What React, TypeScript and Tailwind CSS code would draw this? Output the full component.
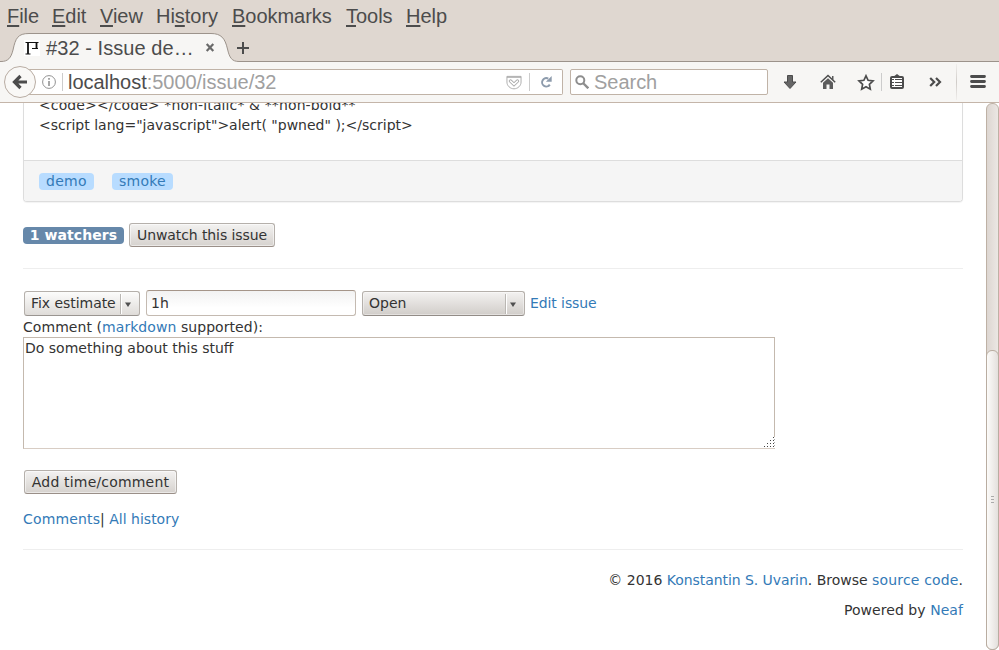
import React from 'react';

const menus: [string, string, string, string][] = [
  ['', 'F', 'ile', 'w-[45px]'],
  ['', 'E', 'dit', 'w-[48px]'],
  ['', 'V', 'iew', 'w-[56px]'],
  ['Hi', 's', 'tory', 'w-[76px]'],
  ['', 'B', 'ookmarks', 'w-[114px]'],
  ['', 'T', 'ools', 'w-[60px]'],
  ['', 'H', 'elp', 'w-[50px]'],
];

function MenuBar() {
  return (
    <div className="flex h-[33px] shrink-0 pl-[7px] text-[20px] leading-[32px] text-[#4c4c4c]">
      {menus.map(([a, key, b, w]) => (
        <div key={key + b} className={`${w} shrink-0 whitespace-nowrap tracking-[-0.03px]`}>
          {a}
          <span className="underline decoration-2 underline-offset-[2px] [text-decoration-skip-ink:none]">{key}</span>
          {b}
        </div>
      ))}
    </div>
  );
}

function TabStrip() {
  return (
    <div className="relative flex h-[29px] shrink-0 items-center">
      <svg className="absolute left-0 top-0" width="999" height="29" viewBox="0 0 999 29">
        <path d="M0 28.5H1C8 28.5 11 25 13 17C15.500 5 18 .5 29 .5H211C221 .5 225 5 227.500 16C229.500 25 232 28.500 239 28.500H999V30H0Z" fill="#f7f6f4" />
        <path d="M0 28.5H1C8 28.5 11 25 13 17C15.500 5 18 .5 29 .5H211C221 .5 225 5 227.500 16C229.500 25 232 28.500 239 28.500H999" fill="none" stroke="#9c938b" />
      </svg>
      <div className="relative flex h-full w-full items-center pl-[24px]">
        <svg width="16" height="16" viewBox="0 0 16 16" className="mr-[6px] shrink-0">
          <path d="M0 0H16V16H0Z" fill="#fff" />
          <path d="M1.500 2.500H14.500M1.500 14H6.500M8 8.500H14" fill="none" stroke="#111" strokeWidth="1.200" />
          <path d="M4 2V14M12.500 2V8.500" fill="none" stroke="#111" strokeWidth="1.800" />
        </svg>
        <span className="w-[159px] shrink-0 whitespace-nowrap text-[20px] leading-[29px] tracking-[0.07px] text-[#4c4c4c]"><span className="relative top-[1px]">#32 - Issue de…</span></span>
        <svg width="10" height="9" viewBox="0 0 10 9" className="shrink-0"><path d="M1.700 1L8.300 8M8.300 1L1.700 8" stroke="#6a6a6a" strokeWidth="2.200" /></svg>
        <svg width="12" height="12" viewBox="0 0 12 12" className="ml-[22px] shrink-0"><path d="M6 0V12M0 6H12" stroke="#4c4c4c" strokeWidth="2" /></svg>
      </div>
    </div>
  );
}

function Toolbar() {
  return (
    <div className="flex h-[41px] shrink-0 items-center border-b border-[#c4b5a9] bg-[#f7f6f4]">
      <div className="relative z-10 ml-[4px] flex h-[32px] w-[32px] shrink-0 items-center justify-center rounded-full border border-[#b9ada3] bg-[#f9f8f6]">
        <svg width="16" height="16" viewBox="0 0 16 16"><path d="M8.500 2L2.500 8L8.500 14M3 8H15" fill="none" stroke="#4c4c4c" strokeWidth="3.200" /></svg>
      </div>
      <div className="ml-[-8px] flex h-[26px] w-[535px] shrink-0 items-center rounded-r-[2px] border border-l-0 border-[#c0b3a7] bg-white pl-[14px]">
        <svg width="14" height="14" viewBox="0 0 14 14" className="shrink-0"><circle cx="7" cy="7" r="6.400" fill="none" stroke="#929292" /><path d="M7 3V4.800M7 6V11" stroke="#929292" strokeWidth="1.600" /></svg>
        <div className="ml-[6px] mr-[5px] h-[18px] w-px bg-[#ccc]" />
        <span className="w-[438px] shrink-0 text-[20px] leading-[24px] tracking-[-0.03px] text-[#4c4c4c]">localhost<span className="text-[#a0a0a0]">:5000/issue/32</span></span>
        <svg width="16" height="15" viewBox="0 0 17 15" className="mt-[1px] shrink-0" fill="none" stroke="#aaa"><path d="M1 1H16V7C16 11 12.500 14.200 8.500 14.200S1 11 1 7Z" /><path d="M1 2H16" /><path d="M4.800 6L8.500 9.500L12.200 6" strokeWidth="3.600" strokeLinecap="round" /><path d="M4.800 6L8.500 9.500L12.200 6" stroke="#fff" strokeWidth="1.600" strokeLinecap="round" /></svg>
        <div className="ml-[7px] h-[18px] w-px bg-[#ccc]" />
        <svg width="12" height="12" viewBox="0 0 12 12" className="ml-[10px] shrink-0"><path d="M8.300 2.600A4.200 4.200 0 1 0 9.800 8.600" fill="none" stroke="#8d9bac" strokeWidth="2" /><path d="M11.700 0V5.800H5.900Z" fill="#8d9bac" /></svg>
      </div>
      <div className="ml-[7px] flex h-[26px] w-[198px] shrink-0 items-center rounded-[2px] border border-[#c0b3a7] bg-white pl-[4px]">
        <svg width="14" height="14" viewBox="0 0 14 14" className="shrink-0"><circle cx="5.300" cy="5.300" r="4" fill="none" stroke="#8e8e8e" strokeWidth="2" /><path d="M8 8L13.300 13.300" stroke="#8e8e8e" strokeWidth="2.400" /></svg>
        <span className="ml-[5px] text-[20px] leading-[24px] tracking-[-0.03px] text-[#a0a0a0]">Search</span>
      </div>
      <svg width="16" height="16" viewBox="0 0 16 16" className="ml-[14px] shrink-0"><path d="M5.500 1.500H10.500V8H14L8 14.500L2 8H5.500Z" fill="#666" stroke="#4c4c4c" /></svg>
      <svg width="16" height="16" viewBox="0 0 16 16" className="ml-[22px] shrink-0"><path d="M3 8.700L8 4.200L13 8.700V15H9.500V10.500H6.500V15H3Z" fill="#5c5c5c" /><path d="M.8 8.300L8 1.500L15.200 8.300" fill="none" stroke="#4c4c4c" strokeWidth="1.500" /><path d="M12 2H13.500V6L12 4.500Z" fill="#5a5a5a" /></svg>
      <svg width="18" height="17" viewBox="0 0 18 17" className="ml-[21px] shrink-0"><path d="M9 1.800L11.100 6.300L16 6.900L12.400 10.300L13.300 15.200L9 12.800L4.700 15.200L5.600 10.300L2 6.900L6.900 6.300Z" fill="#fff" stroke="#4c4c4c" strokeWidth="1.700" /></svg>
      <div className="ml-[6px] h-[18px] w-px bg-[#ccc]" />
      <svg width="16" height="16" viewBox="0 0 16 16" className="ml-[7px] shrink-0"><path d="M4 3L8 0L12 3Z" fill="#4c4c4c" /><rect x="2" y="3" width="12" height="11" rx="1" fill="#fff" stroke="#4c4c4c" strokeWidth="2" /><path d="M3 5.500H5M6 5.500H13M3 8.500H5M6 8.500H13M3 11.500H5M6 11.500H13" stroke="#4c4c4c" /></svg>
      <svg width="13" height="10" viewBox="0 0 13 10" className="ml-[24px] shrink-0"><path d="M1.200 1L5.200 5L1.200 9M7 1L11 5L7 9" fill="none" stroke="#4c4c4c" strokeWidth="2.200" /></svg>
      <div className="ml-[14px] h-[36px] w-px bg-gradient-to-b from-[#f0eeec] via-[#d0ccc8] to-[#f0eeec]" />
      <svg width="16" height="13" viewBox="0 0 16 13" className="-mt-[1px] ml-[13px] shrink-0"><path d="M1.500 1.500H14.500M1.500 6.500H14.500M1.500 11.500H14.500" stroke="#4c4c4c" strokeWidth="2.800" strokeLinecap="round" /></svg>
    </div>
  );
}

function Link({ children }: { children: React.ReactNode }) {
  return <a className="text-[#337ab7]">{children}</a>;
}

function Arrow() {
  return (
    <span className="flex h-[20px] w-[19px] items-center justify-center border-l border-[#bab7b3] shadow-[inset_1px_0_0_#fff]">
      <svg width="6" height="5" viewBox="0 0 6 5" className="-ml-[4px] mt-[1px]"><path d="M0 .5H6L3 5Z" fill="#505050" /></svg>
    </span>
  );
}

function Page() {
  return (
    <main className="h-[547px] w-[986px] shrink-0 overflow-hidden bg-white pl-[23px] pr-[23px] font-['DejaVu_Sans',sans-serif] text-[14px] leading-[20px] text-[#333]">
      <section className="h-[99px] overflow-hidden rounded-b-[4px] border border-t-0 border-[#ddd] shadow-[0_1px_1px_rgba(0,0,0,0.05)]">
        <div className="-mt-[8px] h-[65px] whitespace-nowrap px-[15px]">
          <p className="tracking-[0.12px]">&lt;code&gt;&lt;/code&gt; *non-italic* &amp; **non-bold**</p>
          <p>&lt;script lang="javascript"&gt;alert( "pwned" );&lt;/script&gt;</p>
        </div>
        <div className="flex h-[42px] items-center gap-[18px] border-t border-[#ddd] bg-[#f5f5f5] px-[15px]">
          <span className="h-[17px] w-[55px] rounded-[4px] bg-[#b8dcff] pl-[7px] leading-[17px] tracking-[0.25px] text-[#337ab7]">demo</span>
          <span className="h-[17px] w-[61px] rounded-[4px] bg-[#b8dcff] pl-[7px] leading-[17px] tracking-[0.25px] text-[#337ab7]">smoke</span>
        </div>
      </section>
      <div className="mt-[21px] flex h-[24px] items-center">
        <span className="h-[17px] w-[101px] whitespace-nowrap rounded-[4px] bg-[#6688aa] text-center font-bold leading-[17px] tracking-[0.08px] text-white">1 watchers</span>
        <button className="ml-[5px] h-[24px] w-[146px] whitespace-nowrap rounded-[3px] border border-[#b5b0ab] border-b-[#9a8f88] bg-gradient-to-b from-[#f3f2f1] to-[#d6d2ce] leading-[22px] tracking-[-0.09px] shadow-[inset_0_0_0_1px_rgba(255,255,255,0.5)]">Unwatch this issue</button>
      </div>
      <div className="mt-[21px] h-px bg-[#eee]" />
      <div className="mt-[21px] flex h-[26px]">
        <div className="ml-px mt-[1px] flex h-[25px] w-[116px] items-center justify-between whitespace-nowrap rounded-[3px] border border-[#b5b0ab] border-b-[#9a9591] bg-gradient-to-b from-[#fcfcfb] to-[#dfdcd9] pl-[6px]"><span className="-mt-[2px] tracking-[-0.05px]">Fix estimate</span><Arrow /></div>
        <div className="ml-[6px] h-[26px] w-[210px] rounded-[3px] border border-[#c4bab1] border-t-[#a59589] bg-gradient-to-b from-[#f2f2f2] to-white to-70% pl-[4px] leading-[25px]">1h</div>
        <div className="ml-[6px] mt-[1px] flex h-[25px] w-[163px] items-center justify-between rounded-[3px] border border-[#b5b0ab] border-b-[#928c87] bg-gradient-to-b from-[#f3f2f1] to-[#d1cdc9] pl-[6px] shadow-[inset_0_0_0_1px_rgba(255,255,255,0.4)]"><span className="-mt-[2px]">Open</span><Arrow /></div>
        <span className="ml-[5px] leading-[26px] tracking-[-0.09px]"><Link>Edit issue</Link></span>
      </div>
      <p className="mt-[1px] tracking-[0.06px]">Comment (<Link>markdown</Link> supported):</p>
      <div className="relative h-[112px] w-[752px] border border-[#c4b9ae] border-b-[#d8cdc4] pl-[1px]">
        Do something about this stuff
        <svg className="absolute -bottom-px -right-px" width="12" height="12" viewBox="0 0 12 12" fill="#444">
          <path d="M11 0h1v11h-1z" fill="#fff" />
          <path d="M1 9h1v1H1zM4 9h1v1H4zM7 9h1v1H7zM10 9h1v1H10zM4 6h1v1H4zM7 6h1v1H7zM10 6h1v1H10zM7 3h1v1H7zM10 3h1v1H10zM10 0h1v1H10z" />
          <path d="M11 2h1v1h-1zM11 5h1v1h-1zM11 8h1v1h-1z" fill="#aaa" />
        </svg>
      </div>
      <button className="ml-px mt-[21px] block h-[24px] w-[153px] whitespace-nowrap rounded-[3px] border border-[#b5b0ab] border-b-[#9a8f88] bg-gradient-to-b from-[#f3f2f1] to-[#d6d2ce] leading-[22px] tracking-[0.18px] shadow-[inset_0_0_0_1px_rgba(255,255,255,0.5)]">Add time/comment</button>
      <p className="mt-[15px]"><span className="tracking-[0.15px]"><Link>Comments</Link></span>| <Link>All history</Link></p>
      <div className="mt-[20px] h-px bg-[#eee]" />
      <footer className="mt-[20px] flex flex-col gap-[10px] text-right">
        <p>© 2016 <span className="tracking-[-0.07px]"><Link>Konstantin S. Uvarin</Link></span>. Browse <span className="tracking-[0.16px]"><Link>source code</Link></span>.</p>
        <p className="tracking-[0.06px]">Powered by <Link>Neaf</Link></p>
      </footer>
    </main>
  );
}

function Scrollbar() {
  return (
    <div className="flex h-[547px] w-[13px] shrink-0 flex-col justify-end rounded-[6px] border border-[#beb1a5] bg-gradient-to-r from-[#ddd6d1] to-[#ebe7e4]">
      <div className="-mx-px -mb-px flex h-[300px] flex-col items-center justify-center gap-[2px] rounded-[6px] border border-[#b9ada1] bg-gradient-to-r from-[#fcfbf9] to-[#e4e0dd] pb-[2px]">
        <i className="h-px w-[3px] bg-[#aaa]" />
        <i className="h-px w-[3px] bg-[#aaa]" />
        <i className="h-px w-[3px] bg-[#aaa]" />
      </div>
    </div>
  );
}

export default function App() {
  return (
    <div className="flex h-[650px] w-[999px] flex-col overflow-hidden bg-[#dfd7d0] font-['Liberation_Sans',Arial,sans-serif]">
      <MenuBar />
      <TabStrip />
      <Toolbar />
      <div className="flex bg-white">
        <Page />
        <Scrollbar />
      </div>
    </div>
  );
}
